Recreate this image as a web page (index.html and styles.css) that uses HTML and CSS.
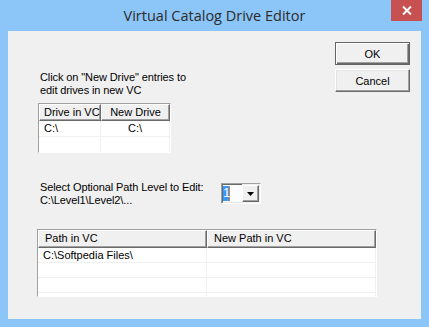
FILE: index.html
```html
<!DOCTYPE html>
<html>
<head>
<meta charset="utf-8">
<link rel="stylesheet" href="styles.css">
</head>
<body>
<div class="window">
  <div class="titlebar">
    <span></span>
    <span class="title">Virtual Catalog Drive Editor</span>
    <button class="close" aria-label="Close">
      <svg width="10" height="9" viewBox="0 0 10 9"><path d="M1 0.5 L9 8.5 M9 0.5 L1 8.5" stroke="#fff" stroke-width="2"/></svg>
    </button>
  </div>
  <div class="client">
    <div class="top">
      <div class="left">
        <p class="note">Click on "New Drive" entries to<br>edit drives in new VC</p>
        <div class="grid grid-drive">
          <div class="row head">
            <div class="hcell d1">Drive in VC</div>
            <div class="hcell d2 center">New Drive</div>
          </div>
          <div class="row r16">
            <div class="cell d1">C:\</div>
            <div class="cell d2 center">C:\</div>
          </div>
          <div class="row r15 last">
            <div class="cell d1"></div>
            <div class="cell d2"></div>
          </div>
        </div>
      </div>
      <div class="buttons">
        <button class="btn default">OK</button>
        <button class="btn">Cancel</button>
      </div>
    </div>
    <div class="level">
      <p class="note level-label">Select Optional Path Level to Edit:<br>C:\Level1\Level2\...</p>
      <div class="combo">
        <span class="combo-field"><span class="sel">1</span></span>
        <span class="combo-btn"><svg width="7" height="4" viewBox="0 0 7 4"><path d="M0 0 H7 L3.5 4 Z" fill="#000"/></svg></span>
      </div>
    </div>
    <div class="grid grid-path">
      <div class="row head">
        <div class="hcell p1">Path in VC</div>
        <div class="hcell p2">New Path in VC</div>
      </div>
      <div class="row r15">
        <div class="cell p1">C:\Softpedia Files\</div>
        <div class="cell p2"></div>
      </div>
      <div class="row r15">
        <div class="cell p1"></div>
        <div class="cell p2"></div>
      </div>
      <div class="row r15">
        <div class="cell p1"></div>
        <div class="cell p2"></div>
      </div>
      <div class="row r15">
        <div class="cell p1"></div>
        <div class="cell p2"></div>
      </div>
    </div>
  </div>
</div>
</body>
</html>
```

FILE: styles.css
```css
* { box-sizing: border-box; }
html, body { margin: 0; padding: 0; }
body {
  width: 429px;
  height: 327px;
  overflow: hidden;
  font-family: "Liberation Sans", Arial, sans-serif;
  font-size: 11px;
  color: #000;
}
.window {
  width: 429px;
  height: 327px;
  background: #8cc5f7;
  padding: 0 8px 8px 8px;
  display: flex;
  flex-direction: column;
}
.titlebar {
  height: 31px;
  display: grid;
  grid-template-columns: 1fr auto 1fr;
  margin: 0 -8px;
}
.title {
  font-family: "Open Sans", "Noto Sans", sans-serif;
  font-size: 14.5px;
  color: #2b2b2b;
  line-height: 29px;
  padding-top: 1px;
  white-space: nowrap;
}
.close {
  justify-self: end;
  margin-right: 7px;
  width: 31px;
  height: 21px;
  border: 0;
  padding: 0;
  background: #c75050;
  display: flex;
  align-items: center;
  justify-content: center;
}
.client {
  flex: 1;
  background: #f0f0f0;
  padding: 0 11px 0 30px;
  display: flex;
  flex-direction: column;
}
.top {
  display: flex;
  align-items: flex-start;
}
.left {
  flex: 1;
  margin-top: 40px;
}
.note {
  margin: 0;
  line-height: 13px;
  padding-left: 2px;
  white-space: nowrap;
  letter-spacing: -0.1px;
}
.buttons {
  margin-top: 11px;
  display: flex;
  flex-direction: column;
  gap: 4px;
}
.btn {
  width: 75px;
  height: 23px;
  font-family: "Liberation Sans", Arial, sans-serif;
  font-size: 11px;
  color: #000;
  background: #f0f0f0;
  border-style: solid;
  border-width: 1px;
  border-color: #fff #696969 #696969 #fff;
  box-shadow: inset -1px -1px 0 #a0a0a0, inset 1px 1px 0 #e3e3e3;
  padding: 0;
}
.btn.default {
  border-color: #646464;
  box-shadow: inset 1px 1px 0 #fff, inset -1px -1px 0 #696969, inset -2px -2px 0 #a0a0a0;
}
.grid {
  background: #fff;
  border-style: solid;
  border-width: 1px;
  border-color: #a0a0a0 #fff #fff #a0a0a0;
  overflow: hidden;
}
.grid-drive {
  margin-top: 6px;
  width: 133px;
  height: 50px;
}
.grid-path {
  margin-top: 22px;
  margin-left: -1px;
  width: 340px;
  height: 68px;
}
.row {
  display: flex;
}
.head { height: 17px; }
.grid-path .head { height: 18px; }
.r16 { height: 16px; }
.r15 { height: 15px; }
.hcell {
  background: #f0f0f0;
  border-style: solid;
  border-width: 1px;
  border-color: #fff #696969 #696969 #fff;
  box-shadow: inset -1px -1px 0 #a0a0a0;
  padding-left: 4px;
  line-height: 14px;
  white-space: nowrap;
}
.cell {
  border-right: 1px solid #f0f0f0;
  border-bottom: 1px solid #f0f0f0;
  padding-left: 5px;
  line-height: 14px;
  white-space: nowrap;
}
.last .cell { border-bottom: 0; }
.center { text-align: center; padding-left: 0; }
.d1 { width: 62px; }
.d2 { width: 69px; }
.p1 { width: 169px; }
.p2 { width: 169px; }
.grid-path .hcell { padding-left: 6px; }
.level {
  margin-top: 28px;
  display: flex;
  align-items: flex-start;
}
.level-label {
  width: 183px;
}
.combo {
  margin-top: 2px;
  width: 40px;
  height: 21px;
  border-style: solid;
  border-width: 1px;
  border-color: #a0a0a0 #fff #fff #a0a0a0;
  display: flex;
}
.combo-field {
  flex: 1;
  background: #fff;
  border-style: solid;
  border-width: 1px 0 1px 1px;
  border-color: #696969 #e3e3e3 #e3e3e3 #696969;
  padding: 1px 0 0 0;
  display: flex;
  align-items: flex-start;
}
.sel {
  background: #3399ff;
  color: #fff;
  font-size: 13px;
  line-height: 14px;
  height: 15px;
  width: 7px;
  text-align: center;
  border-right: 1px solid #e07a30;
}
.combo-btn {
  width: 17px;
  background: #f0f0f0;
  border-style: solid;
  border-width: 1px;
  border-color: #fff #696969 #696969 #fff;
  box-shadow: inset -1px -1px 0 #a0a0a0;
  display: flex;
  align-items: center;
  justify-content: center;
  margin: 1px 1px 1px 0;
}
```
